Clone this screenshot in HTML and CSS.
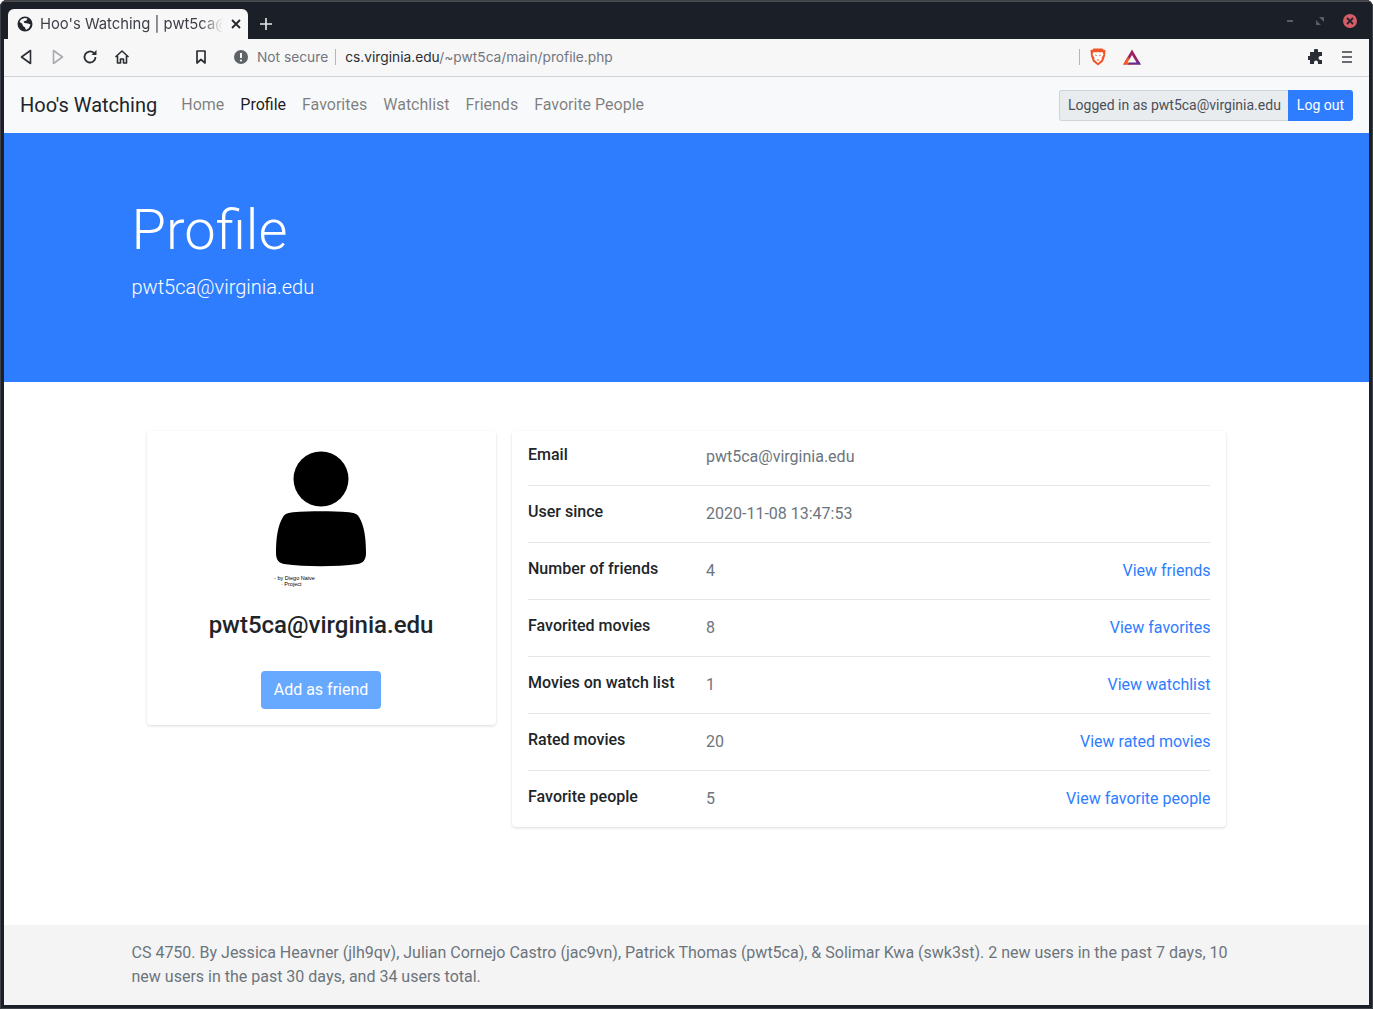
FILE: index.html
```html
<!DOCTYPE html>
<html lang="en">
<head>
  <meta charset="UTF-8">
  <title>Hoo's Watching | pwt5ca@virginia.edu</title>
  <link rel="stylesheet" href="styles.css">
</head>
<body>
  <div class="window">
    <div class="tabbar">
      <div class="tab">
        <svg class="tab-globe" width="16" height="16" viewBox="0 0 16 16"><circle cx="8" cy="8" r="7.500" fill="#22252c"/><path d="M4 3.500l3.500-1.500 3 .5-1 2-3 1 1 1.500 3.500.5 2.500 1-1.500 3.500-3 2-1-2.500-2-1.500-1-2.500-2.500-1.500z" fill="#f7f7f7"/></svg>
        <span class="tab-title">Hoo's Watching | pwt5ca@virginia.edu</span>
        <svg class="tab-close" width="10" height="10" viewBox="0 0 10 10"><path d="M1 1l8 8M9 1l-8 8" stroke="#22252c" stroke-width="1.800"/></svg>
      </div>
      <svg class="new-tab" width="12" height="12" viewBox="0 0 12 12"><path d="M6 0v12M0 6h12" stroke="#e8e8e8" stroke-width="1.600"/></svg>
      <div class="win-controls">
        <span class="win-min"></span>
        <svg width="8" height="8" viewBox="0 0 8 8"><path d="M0 8V3l5 5zM8 0v5L3 0z" fill="#5a5d64"/></svg>
        <span class="win-close"><svg width="8" height="8" viewBox="0 0 8 8"><path d="M1 1l6 6M7 1L1 7" stroke="#23262d" stroke-width="1.800"/></svg></span>
      </div>
    </div>

    <div class="toolbar">
      <svg class="tool-back" width="12" height="16" viewBox="0 0 12 16"><path d="M10.500 1.500v13L1.500 8z" fill="none" stroke="#2b2e35" stroke-width="1.600" stroke-linejoin="round"/></svg>
      <svg class="tool-fwd" width="12" height="16" viewBox="0 0 12 16"><path d="M1.500 1.500v13l9-6.500z" fill="none" stroke="#a9abb0" stroke-width="1.600" stroke-linejoin="round"/></svg>
      <svg class="tool-reload" width="16" height="16" viewBox="0 0 16 16"><path d="M13.500 8a5.500 5.500 0 1 1-1.700-4" fill="none" stroke="#2b2e35" stroke-width="1.800"/><path d="M14.500 1v5h-5z" fill="#2b2e35"/></svg>
      <svg class="tool-home" width="16" height="16" viewBox="0 0 16 16"><path d="M1.500 8L8 2l6.500 6M3.500 7v7h3v-4h3v4h3V7" fill="none" stroke="#2b2e35" stroke-width="1.600" stroke-linejoin="round"/></svg>
      <svg class="tool-bookmark" width="12" height="14" viewBox="0 0 12 14"><path d="M2 1h8v12L6 9.500 2 13z" fill="none" stroke="#2b2e35" stroke-width="1.700" stroke-linejoin="round"/></svg>
      <svg class="tool-warn" width="14" height="14" viewBox="0 0 14 14"><circle cx="7" cy="7" r="7" fill="#5f6368"/><path d="M7 3v5" stroke="#f7f7f7" stroke-width="2"/><circle cx="7" cy="10.500" r="1.100" fill="#f7f7f7"/></svg>
      <span class="not-secure">Not secure</span>
      <span class="url"><b>cs.virginia.edu</b>/~pwt5ca/main/profile.php</span>
      <span class="tool-sep"></span>
      <svg class="tool-brave" width="16" height="18" viewBox="0 0 16 18"><path d="M3.500 0.500h9l1 1.200 2 .3-.5 6-2 5.500-5 4-5-4-2-5.500L.500 2l2-.3z" fill="#f1562b"/><path d="M3.500 4l3 .5L8 3.800l1.500 .7 3-.5 1 2.500-2 3.500 .3 1.500L8 15l-3.800-3.500 .3-1.500-2-3.500z" fill="#fff"/><path d="M5 6.500l2 .8-1 1.200zM11 6.500l-2 .8 1 1.200zM6.500 11.500h3L8 13z" fill="#f1562b"/></svg>
      <svg class="tool-bat" width="18" height="16" viewBox="0 0 18 16"><path d="M9 0.500L17.800 15.500H.200z" fill="#9e1f63"/><path d="M.200 15.500L5 7.500l4 8z" fill="#f15a22"/><path d="M5 15.500h12.800l-2-3.500H7z" fill="#662d91"/><path d="M9 6l4.500 7.500h-9z" fill="#f7f7f7"/></svg>
      <svg class="tool-puzzle" width="16" height="16" viewBox="0 0 16 16"><path d="M6 1.500a2 2 0 0 1 4 0V3h4v4h-1.500a2 2 0 0 0 0 4H14v4h-4v-1.500a2 2 0 0 0-4 0V15H2v-4H.800a2 2 0 0 1 0-4H2V3h4z" fill="#2b2e35"/></svg>
      <svg class="tool-menu" width="10" height="12" viewBox="0 0 10 12"><path d="M0 1h10M0 6h10M0 11h10" stroke="#3c3f46" stroke-width="1.600"/></svg>
    </div>

    <nav class="navbar">
      <a class="brand">Hoo's Watching</a>
      <ul class="nav-links">
        <li>Home</li>
        <li class="active">Profile</li>
        <li>Favorites</li>
        <li>Watchlist</li>
        <li>Friends</li>
        <li>Favorite People</li>
      </ul>
      <div class="login-group">
        <span class="login-text">Logged in as pwt5ca@virginia.edu</span>
        <a class="logout">Log out</a>
      </div>
    </nav>

    <header class="jumbotron">
      <div class="container">
        <h1>Profile</h1>
        <p class="lead">pwt5ca@virginia.edu</p>
      </div>
    </header>

    <main class="content">
      <section class="card user-card">
        <svg class="avatar" width="110" height="140" viewBox="0 0 110 140">
          <circle cx="55" cy="32" r="27.500" fill="#000"/>
          <path d="M17 70C19 66.500 23 65.500 27 65.200C45 64 65 64 83 65.200C87 65.500 91 66.500 93 70C98 78 100 90 100 106C100 113 97 116 92 117C70 120 40 120 18 117C13 116 10 113 10 106C10 90 12 78 17 70Z" fill="#000"/>
          <text class="credit" x="8" y="133">⁃ by Diego Naive</text>
          <text class="credit" x="15" y="139">· Project</text>
        </svg>
        <h4>pwt5ca@virginia.edu</h4>
        <a class="friend-btn">Add as friend</a>
      </section>

      <section class="card stats-card">
        <div class="stat-row">
          <h6>Email</h6>
          <span class="stat-value">pwt5ca@virginia.edu</span>
        </div>
        <div class="stat-row">
          <h6>User since</h6>
          <span class="stat-value">2020-11-08 13:47:53</span>
        </div>
        <div class="stat-row">
          <h6>Number of friends</h6>
          <span class="stat-value">4</span>
          <a class="stat-link">View friends</a>
        </div>
        <div class="stat-row">
          <h6>Favorited movies</h6>
          <span class="stat-value">8</span>
          <a class="stat-link">View favorites</a>
        </div>
        <div class="stat-row">
          <h6>Movies on watch list</h6>
          <span class="stat-value">1</span>
          <a class="stat-link">View watchlist</a>
        </div>
        <div class="stat-row">
          <h6>Rated movies</h6>
          <span class="stat-value">20</span>
          <a class="stat-link">View rated movies</a>
        </div>
        <div class="stat-row">
          <h6>Favorite people</h6>
          <span class="stat-value">5</span>
          <a class="stat-link">View favorite people</a>
        </div>
      </section>
    </main>

    <footer class="footer">
      <p>CS 4750. By Jessica Heavner (jlh9qv), Julian Cornejo Castro (jac9vn), Patrick Thomas (pwt5ca), &amp; Solimar Kwa (swk3st). 2 new users in the past 7 days, 10 new users in the past 30 days, and 34 users total.</p>
    </footer>
  </div>
</body>
</html>
```

FILE: styles.css
```css
* {
  box-sizing: border-box;
}
html, body {
  margin: 0;
  height: 100%;
}
body {
  font-family: Roboto, sans-serif;
  font-size: 16px;
  color: #212529;
  background: #fff;
  overflow: hidden;
}
.window {
  height: 1009px;
  display: flex;
  flex-direction: column;
  padding: 0 4px 4px;
  overflow: hidden;
  background: #1b1f28;
  border-radius: 7px 7px 0 0;
  outline: 1px solid #3e4147;
  outline-offset: -1px;
}

/* browser chrome */
.tabbar {
  height: 39px;
  flex-shrink: 0;
  margin: 0 -4px;
  display: flex;
  align-items: flex-end;
  background: #1b1f28;
  border-top: 2px solid #4a4c50;
  padding-left: 8px;
}
.tab {
  width: 240px;
  height: 30px;
  display: flex;
  align-items: center;
  background: #f7f7f7;
  border-radius: 6px 6px 0 0;
  padding: 0 7px 0 9px;
}
.tab-globe {
  flex-shrink: 0;
}
.tab-title {
  width: 183px;
  margin-left: 7px;
  padding-bottom: 1px;
  font-family: Inter, "Noto Sans", sans-serif;
  font-size: 14.800px;
  color: #3c3f46;
  white-space: nowrap;
  overflow: hidden;
  -webkit-mask-image: linear-gradient(to right, #000 88%, transparent 100%);
  mask-image: linear-gradient(to right, #000 88%, transparent 100%);
}
.tab-close {
  margin-left: auto;
  flex-shrink: 0;
}
.new-tab {
  margin: 0 0 9px 12px;
}
.win-controls {
  margin-left: auto;
  align-self: center;
  display: flex;
  align-items: center;
  gap: 19px;
  padding-right: 16px;
  padding-top: 1px;
}
.win-min {
  width: 6px;
  height: 2px;
  margin-right: 4px;
  background: #5a5d64;
}
.win-close {
  width: 14px;
  height: 14px;
  border-radius: 50%;
  background: #d75c66;
  display: flex;
  align-items: center;
  justify-content: center;
}
.toolbar {
  height: 38px;
  flex-shrink: 0;
  display: flex;
  align-items: center;
  padding-bottom: 1px;
  background: #f7f7f7;
  border-bottom: 1px solid #d2d3d4;
  font-family: Inter, "Noto Sans", sans-serif;
  font-size: 13.750px;
}
.tool-back {
  margin-left: 16px;
}
.tool-fwd {
  margin-left: 20px;
}
.tool-reload {
  margin-left: 18px;
}
.tool-home {
  margin-left: 16px;
}
.tool-bookmark {
  margin-left: 65px;
}
.tool-warn {
  margin-left: 27px;
}
.not-secure {
  margin-left: 9px;
  padding-right: 7px;
  color: #73767e;
  border-right: 1px solid #b5b6b9;
}
.url {
  margin-left: 9px;
  color: #73767e;
}
.url b {
  font-weight: 400;
  color: #2b2e35;
}
.tool-sep {
  width: 1px;
  height: 16px;
  background: #b5b6b9;
  margin-left: auto;
}
.tool-brave {
  margin-left: 10px;
}
.tool-bat {
  margin-left: 17px;
}
.tool-puzzle {
  margin-left: 167px;
}
.tool-menu {
  margin-left: 18px;
  margin-right: 17px;
}

/* page */
.navbar {
  height: 56px;
  flex-shrink: 0;
  display: flex;
  align-items: center;
  padding: 0 16px 1px;
  background: #f8f9fa;
}
.brand {
  font-size: 20px;
  margin-right: 16px;
}
.nav-links {
  list-style: none;
  display: flex;
  margin: 0;
  padding: 0;
  color: rgba(0, 0, 0, .5);
}
.nav-links li {
  padding: 0 8px;
}
.nav-links .active {
  color: rgba(0, 0, 0, .9);
}
.login-group {
  margin-left: auto;
  margin-top: 2px;
  display: flex;
  font-size: 14px;
  line-height: 21px;
}
.login-text {
  padding: 4px 7px 4px 8px;
  color: #495057;
  background: #e9ecef;
  border: 1px solid #ced4da;
  border-right: 0;
  border-radius: 3px 0 0 3px;
}
.logout {
  padding: 5px 9px;
  color: #fff;
  background: #2e7dff;
  border-radius: 0 3px 3px 0;
}
.jumbotron {
  height: 249px;
  flex-shrink: 0;
  padding-top: 64px;
  color: #fff;
  background: #2e7dff;
}
.container {
  width: 1110px;
  margin: 0 auto;
}
h1 {
  margin: 0 0 8px;
  font-size: 56px;
  font-weight: 300;
  line-height: 1.2;
}
.lead {
  margin: 0;
  font-size: 20px;
  font-weight: 300;
  line-height: 30px;
}
.content {
  flex: 1;
  padding-top: 49px;
  display: flex;
  justify-content: center;
  align-items: flex-start;
  gap: 16px;
  background: #fff;
}
.card {
  background: #fff;
  border-radius: 4px;
  box-shadow: 0 1px 3px rgba(0, 0, 0, .15);
}
.user-card {
  width: 349px;
  height: 294px;
  padding: 16px 1px 0 0;
  text-align: center;
}
.avatar {
  display: block;
  margin: 0 auto;
}
.credit {
  font-size: 5.500px;
  font-family: "Liberation Sans", sans-serif;
}
h4 {
  margin: 24px 0 31px;
  font-size: 24px;
  font-weight: 500;
  line-height: 29px;
}
.friend-btn {
  display: inline-block;
  padding: 7px 13px;
  line-height: 24px;
  color: #fff;
  background: #66a9ff;
  border-radius: 4px;
}
.stats-card {
  width: 714px;
  padding: 0 16px;
}
.stat-row {
  height: 57px;
  display: flex;
  align-items: flex-start;
  padding-top: 16px;
  border-bottom: 1px solid #e4e5e6;
}
.stat-row:first-child {
  height: 55px;
  padding-top: 14px;
}
.stat-row:last-child {
  height: 56px;
  border-bottom: 0;
}
h6 {
  width: 178px;
  margin: 0;
  flex-shrink: 0;
  font-size: 16px;
  font-weight: 500;
  line-height: 19px;
}
.stat-value {
  color: #6c757d;
  line-height: 24px;
}
.stat-link {
  margin-left: auto;
  margin-right: -.5px;
  line-height: 24px;
  color: #2e7dff;
}
.footer {
  height: 80px;
  flex-shrink: 0;
  padding-top: 16px;
  color: #6c757d;
  background: #f4f4f4;
}
.footer p {
  width: 1110px;
  margin: 0 auto;
  line-height: 24px;
}
```
